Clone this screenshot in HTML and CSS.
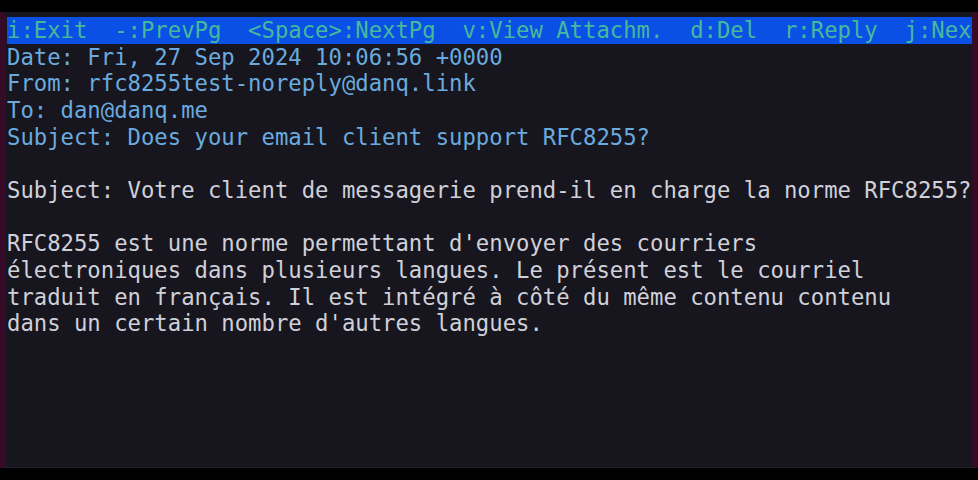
FILE: index.html
```html
<!DOCTYPE html>
<html lang="fr">
<head>
<meta charset="utf-8">
<title>mutt pager</title>
<link rel="stylesheet" href="styles.css">
</head>
<body>
<div class="screen">
  <div class="term">
    <div class="line status">i:Exit  -:PrevPg  &lt;Space&gt;:NextPg  v:View Attachm.  d:Del  r:Reply  j:Nex</div>
    <div class="line hdr">Date: Fri, 27 Sep 2024 10:06:56 +0000</div>
    <div class="line hdr">From: rfc8255test-noreply@danq.link</div>
    <div class="line hdr">To: dan@danq.me</div>
    <div class="line hdr">Subject: Does your email client support RFC8255?</div>
    <div class="line"> </div>
    <div class="line body">Subject: Votre client de messagerie prend-il en charge la norme RFC8255?</div>
    <div class="line"> </div>
    <div class="line body">RFC8255 est une norme permettant d'envoyer des courriers</div>
    <div class="line body">électroniques dans plusieurs langues. Le présent est le courriel</div>
    <div class="line body">traduit en français. Il est intégré à côté du même contenu contenu</div>
    <div class="line body">dans un certain nombre d'autres langues.</div>
  </div>
</div>
</body>
</html>
```
FILE: styles.css
```css
html, body {
  margin: 0;
  padding: 0;
  background: #000;
  width: 978px;
  height: 480px;
  overflow: hidden;
}
.screen {
  margin-top: 12px;
  height: 450px;
  background: #17161f;
  border-left: 6px solid #360b27;
  border-right: 6px solid #360b27;
  border-bottom: 1px solid #22212a;
  padding: 5px 0 0 1px;
  box-sizing: content-box;
  width: 965px;
}
.term {
  font-family: "DejaVu Sans Mono", "Liberation Mono", monospace;
  font-size: 22.25px;
  line-height: 26.67px;
  color: #cfcfd6;
}
.line {
  white-space: pre;
  height: 26.67px;
  overflow: hidden;
}
.status {
  background: #0a50e4;
  color: #46b89c;
}
.hdr {
  color: #6aaade;
}
.body {
  color: #d0d0d8;
}
```
